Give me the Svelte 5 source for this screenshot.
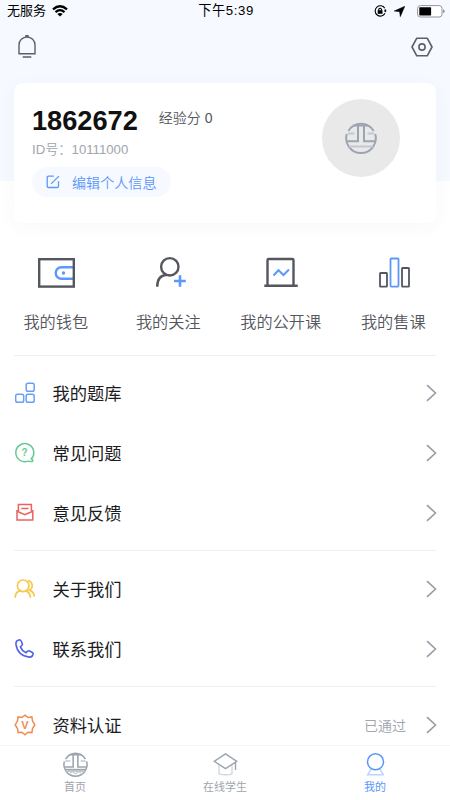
<script>
  const shortcuts = [
    { id: 'wallet', label: '我的钱包' },
    { id: 'follow', label: '我的关注' },
    { id: 'course', label: '我的公开课' },
    { id: 'sales', label: '我的售课' }
  ];
  const groups = [
    [
      { id: 'bank', label: '我的题库' },
      { id: 'faq', label: '常见问题' },
      { id: 'feedback', label: '意见反馈' }
    ],
    [
      { id: 'about', label: '关于我们' },
      { id: 'contact', label: '联系我们' }
    ],
    [{ id: 'verify', label: '资料认证', note: '已通过' }]
  ];
</script>

{#snippet emblem(size, tab)}
  <svg width={size} height={size} viewBox="0 0 32 32" fill="none" stroke="#9ca5b0" stroke-width="2">
    <path d="M3.4 9A14.6 14.6 0 0 1 28.6 9M1.8 12A14.8 14.8 0 1 0 30.2 12" />
    <path d="M13 2v17.3H1.8M19 2v17.3h11.2M9 3.4h14" />
    <path d="M3 11.5h6.5M22.5 11.5H29M4 24.5h24" stroke="#c3c8ce" />
    {#if tab}
      <path d="M2.8 22.5h26.4" />
      <path d="M9 27l3-2 4 3 4-3 3 2" stroke="#c3c8ce" stroke-width="1.5" />
    {/if}
  </svg>
{/snippet}

<div class="screen">
  <div class="top">
    <div class="status">
      <div class="side left">
        <span>无服务</span>
        <svg width="16" height="12" viewBox="0 0 16 12" fill="none" stroke="#000" stroke-width="2.3">
          <path d="M1 4.4Q8-1.9 15 4.4M3.5 7.1Q8 3.2 12.5 7.1" />
          <path d="M8 11.6 5.3 9Q8 6.9 10.7 9Z" fill="#000" stroke="none" />
        </svg>
      </div>
      <div class="time">下午5:39</div>
      <div class="side right">
        <svg width="13" height="12" viewBox="0 0 13 12" fill="none" stroke="#000" stroke-width="1.1">
          <path d="M10.8 3.2A5.2 5.2 0 1 0 11 8.3M11.3 4.2v2.2" />
          <path d="M9.9 5.6h2.8l-1.4 2z" fill="#000" stroke="none" />
          <rect x="3.7" y="5.2" width="4.8" height="3.6" fill="#000" stroke="none" />
          <path d="M4.7 5.5V4.2q1.4-2 2.8 0v1.3" />
        </svg>
        <svg class="arrow" width="11" height="11" viewBox="0 0 11 11"><path d="M10.8.3 6.3 10.7 5.6 5.7.2 5Z" stroke="#000" stroke-width=".5" /></svg>
        <svg width="28" height="13" viewBox="0 0 28 13">
          <rect x=".6" y=".6" width="24.4" height="11.4" rx="2.8" fill="#fff" stroke="#929499" />
          <rect x="2.3" y="2.2" width="11.8" height="8.2" rx=".6" />
          <path d="M26 4.3q1.7.5 1.7 2t-1.7 2z" fill="#929499" />
        </svg>
      </div>
    </div>
    <div class="tools">
      <svg width="20" height="24" viewBox="0 0 20 24" fill="none" stroke="#5c5f67" stroke-width="1.4">
        <path d="M2 18.8V10a8 8 0 0 1 16 0v8.8ZM9 2V.8h2V2M5.7 22h8.6" />
      </svg>
      <svg width="22" height="20" viewBox="0 0 22 20" fill="none" stroke="#5c5f67" stroke-width="1.6">
        <path d="M5.8 1.2h10.4l4.8 8.8-4.8 8.8H5.8L1 10Z" stroke-linejoin="round" />
        <circle cx="11" cy="10" r="3.1" />
      </svg>
    </div>
  </div>

  <section class="card">
    <div class="profile">
      <div class="name-line"><b>1862672</b><span>经验分 0</span></div>
      <div class="uid">ID号：10111000</div>
      <div class="edit">
        <svg width="14" height="14" viewBox="0 0 14 14" fill="none" stroke="#5d97f8" stroke-width="1.3">
          <path d="M7.8 1.2H2.5Q1.2 1.2 1.2 2.5v8.7q0 1.3 1.3 1.3h8.7q1.3 0 1.3-1.3V6.2M5.1 8.9l7.8-7.8" />
        </svg>
        <span>编辑个人信息</span>
      </div>
    </div>
    <div class="avatar">{@render emblem(32, false)}</div>
  </section>

  <nav class="shortcuts">
    {#each shortcuts as item}
      <div class="shortcut">
        <svg width="40" height="34" viewBox="0 0 40 34" fill="none" stroke="#54575e" stroke-width="2.4">
          {#if item.id === 'wallet'}
            <path d="M38 11.2H25.5a5.8 5.8 0 0 0 0 11.6H38" stroke="#5c98f8" />
            <circle cx="27.5" cy="17" r="1.7" fill="#5c98f8" stroke="none" />
            <rect x="3.2" y="3.2" width="34.6" height="27.4" />
          {:else if item.id === 'follow'}
            <circle cx="20.8" cy="10.8" r="8.7" />
            <path d="M8.2 30.7q0-11.2 9.4-12" />
            <path d="M25 25h11.8M31 19.2v11.5" stroke="#5c98f8" stroke-width="2.6" />
          {:else if item.id === 'course'}
            <path d="M6.5 29V4.2q0-1.2 1.2-1.2h23.6q1.2 0 1.2 1.2V29" />
            <path d="M3.3 29.8h33.4" />
            <path d="m12.5 19.5 5-5.3 5 4.8 5.5-5.5" stroke="#5c98f8" stroke-width="2" />
          {:else}
            <g stroke-width="1.8">
              <rect x="6" y="17" width="7" height="13.6" rx=".6" />
              <rect x="16.5" y="2.5" width="8" height="28.1" rx=".8" stroke="#5c98f8" />
              <rect x="28" y="12" width="7" height="18.6" rx=".6" />
            </g>
          {/if}
        </svg>
        <span>{item.label}</span>
      </div>
    {/each}
  </nav>

  <main>
    {#each groups as group}
      <div class="group">
        {#each group as row}
          <div class="row">
            <svg class="glyph" width="22" height="22" viewBox="0 0 22 22" fill="none" stroke-width="1.5">
              {#if row.id === 'bank'}
                <g stroke="#689ff8">
                  <rect x="12.2" y="1.3" width="8" height="8" rx="1.8" />
                  <rect x="1.7" y="12.2" width="8" height="8" rx="1.8" />
                  <rect x="12.2" y="12.2" width="8" height="8" rx="1.8" />
                </g>
              {:else if row.id === 'faq'}
                <path d="M16.8 17.4A9 9 0 1 0 14 19.1q2 .7 4.7.2v-1.5l-1.3-.9" stroke="#65cc91" stroke-linejoin="round" />
                <text x="10.6" y="13.9" font-size="10" font-weight="700" text-anchor="middle" fill="#65cc91" stroke="none">?</text>
              {:else if row.id === 'feedback'}
                <g stroke="#ec625e">
                  <path d="M4.4 9V2.6h13V9M3 8v10.1h15.8V8M3 9.2l7.9 3.6 7.9-3.6M7.3 6.5h7.2" />
                </g>
              {:else if row.id === 'about'}
                <g stroke="#f6c84b" stroke-width="1.7">
                  <circle cx="9.2" cy="7.8" r="5.8" />
                  <path d="M1.2 19.8q0-6 5.4-7.1M11.8 12.9q4.3 1.5 4.6 6.9M13.8 2.7a5 5 0 0 1 1.7 9.4q4.6 1.8 4.8 6.5" />
                </g>
              {:else if row.id === 'contact'}
                <path d="M3.2 2.7 5.5 1.8q1 0 1.6 1.2l1.2 2.6q.4 1.1-.5 1.9L6.4 8.7q1.5 4.2 5.7 6l1.6-1.5q.7-.7 1.8-.2l2.9 1.5q1.1.7.6 1.9-.9 3-3.8 2.7Q3.6 17.7 1.9 6.2q-.2-2.2 1.3-3.5Z" stroke="#4f63e5" stroke-width="1.6" />
              {:else}
                <path d="m11 1.2 3.1 2.3 3.8-.6.6 3.9L20.8 11l-2.3 3.6-.6 4-3.8-.4L11 20.8l-3.1-2.6-3.8.4-.6-4L1.2 11l2.3-4.2.6-3.9 3.8.6Z" stroke="#f08a55" />
                <text x="11" y="15" font-size="11" font-weight="700" text-anchor="middle" fill="#f08a55" stroke="none">V</text>
              {/if}
            </svg>
            <span class="label">{row.label}</span>
            {#if row.note}<span class="note">{row.note}</span>{/if}
            <svg width="11" height="18" viewBox="0 0 11 18" fill="none" stroke="#989da5" stroke-width="1.6"><path d="M1 1.2 9.5 9 1 16.8" /></svg>
          </div>
        {/each}
      </div>
    {/each}
  </main>

  <footer>
    <div class="tab">{@render emblem(25, true)}<span>首页</span></div>
    <div class="tab">
      <svg width="25" height="25" viewBox="0 0 25 25" fill="none" stroke="#9ca5b0" stroke-width="1.4">
        <path d="M6 12.5v9.3q6.5 2 13 0v-9.3" stroke="#d3d7df" />
        <path d="M1.2 9.3 12.5 1.8l11.3 7.5-11.3 7.4ZM22.5 10v8" />
      </svg>
      <span>在线学生</span>
    </div>
    <div class="tab active">
      <svg width="25" height="25" viewBox="0 0 25 25" fill="none" stroke="#5897fa" stroke-width="1.5">
        <path d="m8 17.2-3.2 5.5h15.4L17 17.2" stroke="#b9d4fd" />
        <circle cx="12.5" cy="9.8" r="8" />
      </svg>
      <span>我的</span>
    </div>
  </footer>
</div>

<style>
  :global(body) { margin: 0; }
  .screen {
    width: 450px;
    height: 800px;
    overflow: hidden;
    display: flex;
    flex-direction: column;
    background: #fff;
    font-family: "Liberation Sans", "Noto Sans CJK SC", sans-serif;
    color: #1b1c1e;
  }
  svg { display: block; flex: none; }
  .top { height: 181px; flex: none; background: #f6f9ff; }
  .status {
    height: 22px;
    display: flex;
    align-items: center;
    padding: 0 5px 0 7px;
    font-size: 13px;
    color: #000;
  }
  .status span, .time { line-height: 20px; }
  .side { flex: 1; display: flex; align-items: center; }
  .left { gap: 6px; }
  .right { justify-content: flex-end; }
  .arrow { margin: 0 12px 0 7px; }
  .time { font-size: 13.2px; letter-spacing: 0.6px; }
  .tools {
    display: flex;
    justify-content: space-between;
    align-items: center;
    padding: 13px 17px 0;
  }
  .card {
    flex: none;
    box-sizing: border-box;
    height: 140px;
    margin: -98px 14px 0;
    padding: 16px 36px 0 18px;
    display: flex;
    justify-content: space-between;
    border-radius: 9px;
    background: #fff;
    box-shadow: 0 4px 20px rgba(70, 75, 90, 0.04);
  }
  .profile { padding-top: 5px; }
  .name-line { display: flex; align-items: center; height: 32px; gap: 21px; }
  .name-line b { font-size: 27.2px; color: #111; padding-top: 1px; }
  .name-line span { font-size: 14px; color: #53565c; font-weight: 350; padding-bottom: 6px; }
  .uid { height: 27px; line-height: 28px; font-size: 13.2px; color: #a0a5ae; font-weight: 350; }
  .edit {
    display: flex;
    align-items: center;
    gap: 12px;
    box-sizing: border-box;
    width: 139px;
    height: 30px;
    margin-top: 4px;
    padding-left: 14px;
    border-radius: 15px;
    background: #f6f9ff;
    color: #5d97f8;
    font-size: 14.1px;
    font-weight: 350;
    white-space: nowrap;
  }
  .avatar {
    width: 78px;
    height: 78px;
    border-radius: 50%;
    display: flex;
    align-items: center;
    justify-content: center;
    background: #e9e9e9;
  }
  .shortcuts { display: flex; flex: none; height: 131.5px; }
  .shortcut {
    flex: 1;
    display: flex;
    flex-direction: column;
    align-items: center;
    padding-top: 33px;
    font-size: 16.2px;
    font-weight: 350;
    color: #54575e;
  }
  .shortcut span { line-height: 24px; margin-top: 20px; padding-right: 1px; }
  main { flex: 1; min-height: 0; overflow: hidden; padding: 0 14px; }
  .group { border-top: 1px solid #efeff0; padding: 8px 0 7px; }
  .group:first-child { padding-top: 7px; padding-bottom: 7px; }
  .row { height: 60.1px; display: flex; align-items: center; }
  .label { flex: 1; margin-left: 16.5px; font-size: 17.3px; padding-bottom: 1px; }
  .note { font-size: 14px; color: #a0a5ae; margin-right: 20px; padding-bottom: 1px; font-weight: 350; }
  .row > svg:last-child { margin-right: -1px; }
  footer {
    height: 54px;
    flex: none;
    border-top: 1px solid #f4f4f5;
    display: flex;
    background: #fff;
  }
  .tab {
    flex: 1;
    display: flex;
    flex-direction: column;
    align-items: center;
    padding-top: 6px;
    font-size: 11px;
    color: #a0a5ae;
  }
  .tab span { line-height: 16px; margin-top: 2px; }
  .active { color: #5897fa; }
</style>
